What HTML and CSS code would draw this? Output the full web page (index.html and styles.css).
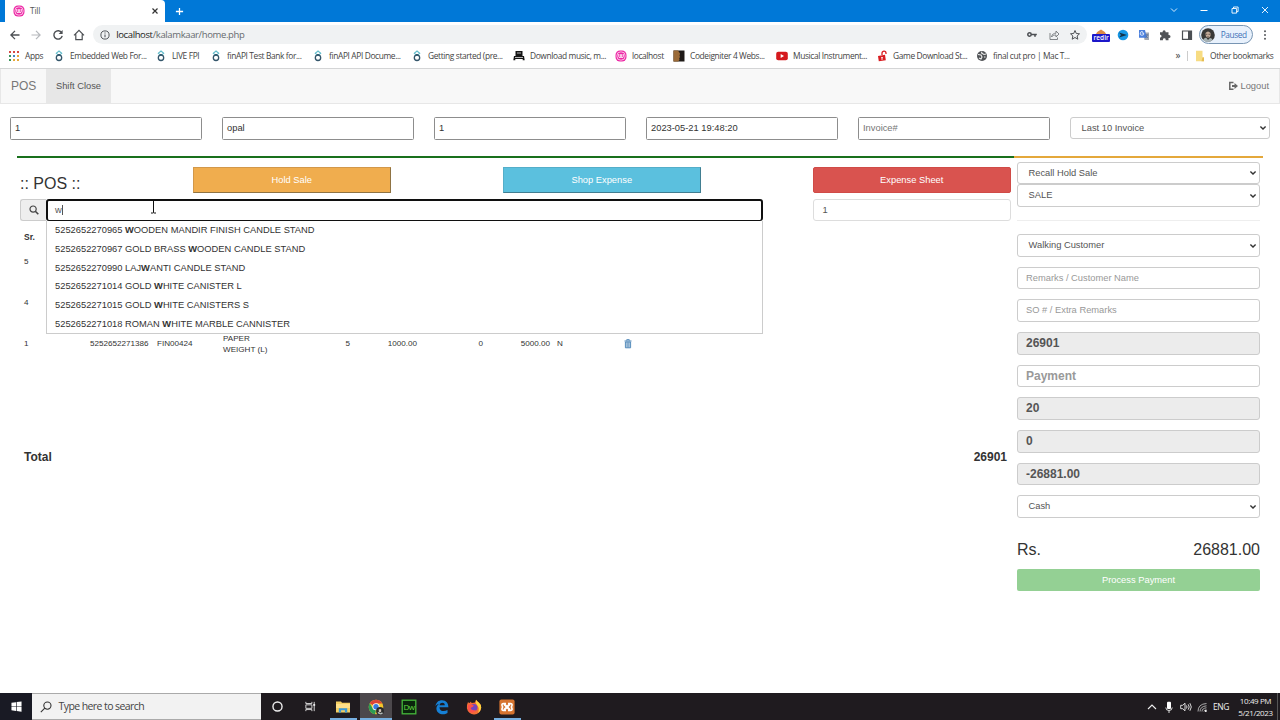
FILE: index.html
```html
<!DOCTYPE html>
<html lang="en">
<head>
<meta charset="utf-8">
<title>Till</title>
<link rel="stylesheet" href="styles.css">
</head>
<body>
<svg class="defs" width="0" height="0">
  <symbol id="chev" viewBox="0 0 8 6"><path d="M1.4 1.5 4 4.1 6.6 1.5" fill="none" stroke="#333" stroke-width="1.4"/></symbol>
  <symbol id="fin" viewBox="0 0 12 12"><path d="M6 1 8.7 3.3 6 5.6 3.3 3.3z" fill="none" stroke="#62bccb" stroke-width="1.1"/><circle cx="6" cy="7.8" r="2.7" fill="none" stroke="#34566b" stroke-width="1.3"/><path d="M3.7 5.8 6 4.2 8.3 5.8" fill="none" stroke="#34566b"/></symbol>
  <symbol id="wamp" viewBox="0 0 12 12"><rect x=".5" y=".5" width="11" height="11" rx="4.5" fill="#ed28a5"/><rect x="2" y="2" width="8" height="8" rx="3.3" fill="none" stroke="#fff" stroke-width=".7"/><path d="M3.8 4v2.6q0 1 1.1 1T6 6.6V4.2 6.6q0 1 1.1 1t1.1-1V4" fill="none" stroke="#fff" stroke-width="1"/></symbol>
</svg>
<div class="tabstrip">
  <div class="tab">
    <svg class="favicon" viewBox="0 0 12 12"><use href="#wamp"/></svg>
    <span>Till</span>
    <svg class="tab-x" viewBox="0 0 8 8"><path d="M1.5 1.5l5 5m0-5l-5 5" stroke="#333" stroke-width="1.2"/></svg>
  </div>
  <svg class="newtab" viewBox="0 0 10 10"><path d="M5 1v8M1 5h8" stroke="#fff" stroke-width="1.4"/></svg>
  <div class="winctl">
    <svg viewBox="0 0 12 12"><path d="M3 4.5 6 7.5 9 4.5" fill="none" stroke="#d5eafc" stroke-width="1"/></svg>
    <svg viewBox="0 0 12 12"><path d="M2.5 6.5h7" stroke="#fff"/></svg>
    <svg viewBox="0 0 12 12"><path d="M3 4.5h4.6v4.6H3zM4.5 4.300V3h4.600v4.600H7.700" fill="none" stroke="#fff" stroke-width=".9"/></svg>
    <svg viewBox="0 0 12 12"><path d="M3 3l6 6m0-6l-6 6" stroke="#fff" stroke-width=".9"/></svg>
  </div>
</div>
<div class="toolbar">
  <div class="navicons">
    <svg viewBox="0 0 12 12"><path d="M10.500 6H2M6 1.900 1.900 6 6 10.100" fill="none" stroke="#4c4f53" stroke-width="1.300"/></svg>
    <svg viewBox="0 0 12 12"><path d="M1.500 6H10M6 1.900 10.100 6 6 10.100" fill="none" stroke="#b5b8bc" stroke-width="1.200"/></svg>
    <svg viewBox="0 0 12 12"><path d="M9.700 3.700A4.200 4.200 0 1 0 10.200 6.900" fill="none" stroke="#4c4f53" stroke-width="1.400"/><path d="M10.600 1v4H6.600z" fill="#4c4f53"/></svg>
    <svg viewBox="0 0 12 12"><path d="M1 6.400 6 1.300l5 5.100M2.800 5.200v5.500h6.400V5.200" fill="none" stroke="#4c4f53" stroke-width="1.200"/></svg>
  </div>
  <div class="url">
    <svg class="info" viewBox="0 0 10 10"><circle cx="5" cy="5" r="4.100" fill="none" stroke="#55585c"/><path d="M5 4.500v2.800M5 2.600v1" stroke="#55585c" stroke-width="1.100"/></svg>
    <span class="addr"><b>localhost</b>/kalamkaar/home.php</span>
    <div class="urlicons">
      <svg viewBox="0 0 12 12"><circle cx="3.500" cy="5.500" r="1.700" fill="none" stroke="#4c4f53" stroke-width="1.500"/><path d="M5 5.500h5.800M9 5.500v2.300" stroke="#4c4f53" stroke-width="1.600"/></svg>
      <svg viewBox="0 0 12 12"><path d="M2 4v6.500h7.500V8.500M3.500 8C4 5 6 4.200 8 4.200V2l3 3-3 3V6C6 6 4.500 6.500 3.500 8z" fill="none" stroke="#74787c" stroke-width=".9"/></svg>
      <svg viewBox="0 0 12 12"><path d="M6 1.500 7.300 4.500l3.200.3L8.100 7l.7 3.200L6 8.500l-2.800 1.700.7-3.200-2.400-2.200 3.200-.3z" fill="none" stroke="#4c4f53" stroke-width="1"/></svg>
    </div>
  </div>
  <div class="exts">
    <div class="redir"><svg viewBox="0 0 18 6"><path d="M4 6Q5 3.500 9 1.500 13 3.500 14 6z" fill="#dc8a45"/></svg><span>redir</span></div>
    <svg viewBox="0 0 12 12"><circle cx="6" cy="6" r="5.300" fill="#1697e5"/><path d="M2 3.500 10 6 2 8.500 4 6z" fill="#10334a"/></svg>
    <svg viewBox="0 0 12 12"><path d="M5 3.500h6V11H6.500z" fill="#a2a8b2"/><path d="M1 1h6l1.800 7.700H1z" fill="#4a7fdc"/><path d="M5.800 4H3.700M5.700 4A1.800 1.800 0 1 1 5 3" fill="none" stroke="#fff" stroke-width=".8"/><path d="M7.500 6h3M9 5v1.500Q8.500 8 7.500 9M8 7l2 2" stroke="#506e9e" stroke-width=".7" fill="none"/></svg>
    <svg viewBox="0 0 12 12"><path d="M1 3.300h2.600V2.800a1.500 1.500 0 0 1 3 0v.5h2.900V6H10a1.500 1.500 0 0 1 0 3h-.5v2.200H6.700v-.5a1.400 1.400 0 0 0-2.800 0v.5H1V8.500h.5a1.400 1.400 0 0 0 0-2.700H1z" fill="#515458"/></svg>
    <svg viewBox="0 0 12 12"><path d="M1.500 2h9v8.300h-9z" fill="none" stroke="#4c4f53" stroke-width="1.200"/><path d="M7 2h4v8.300H7z" fill="#4c4f53"/></svg>
  </div>
  <div class="profile">
    <svg viewBox="0 0 14 14"><circle cx="7" cy="7" r="6.800" fill="#383837"/><path d="M4.500 5Q7 2 9.500 5v3Q7 12 4.800 8z" fill="#c2aa99"/><path d="M2 12q2-3 3.500-2L7 12l2-2q2 0 2.600 2A7 7 0 0 1 2 12z" fill="#a7b3b5"/><path d="M5 6.300h1.300M7.500 6.300H9M6 9h2" stroke="#40342f" stroke-width=".7"/></svg>
    <span>Paused</span>
  </div>
  <svg class="dots" viewBox="0 0 4 12"><circle cx="2" cy="2.200" r="1" fill="#55585c"/><circle cx="2" cy="6" r="1" fill="#55585c"/><circle cx="2" cy="9.800" r="1" fill="#55585c"/></svg>
</div>
<div class="bookmarks">
  <div><svg viewBox="0 0 12 12"><path d="M1 1h2v2H1zm4 0h2v2H5zm4 0h2v2H9z" fill="#d64a43"/><path d="M1 5h2v2H1zm0 4h2v2H1z" fill="#37945a"/><path d="M5 5h2v2H5z" fill="#4285c4"/><path d="M5 9h2v2H5zm4-4h2v2H9zm0 4h2v2H9z" fill="#e7a838"/></svg><span>Apps</span></div>
  <div><svg><use href="#fin"/></svg><span>Embedded Web For...</span></div>
  <div><svg><use href="#fin"/></svg><span>LIVE FPI</span></div>
  <div><svg><use href="#fin"/></svg><span>finAPI Test Bank for...</span></div>
  <div><svg><use href="#fin"/></svg><span>finAPI API Docume...</span></div>
  <div><svg><use href="#fin"/></svg><span>Getting started (pre...</span></div>
  <div><svg viewBox="0 0 12 12"><path d="M2.500 1h7v5H11l.7 4.300h-2V9H2.300v1.300h-2L1 6h1.500z" fill="#151515"/><path d="M4 3h4M2 7.500h8" stroke="#ddd" stroke-width=".8"/></svg><span>Download music, m...</span></div>
  <div><svg><use href="#wamp"/></svg><span>localhost</span></div>
  <div><svg viewBox="0 0 12 12"><path d="M.5.500h11v11H.5z" fill="#1e1a17"/><path d="M.5.500H5L7 3.500 6.500 6l.7 1-1 1 .3 2-1.500 1.500H.5z" fill="#9b6a37"/></svg><span>Codeigniter 4 Webs...</span></div>
  <div><svg viewBox="0 0 12 12"><rect x=".2" y="1.800" width="11.600" height="8.400" rx="2" fill="#d5191d"/><path d="M4.700 4v4L8 6z" fill="#fff"/></svg><span>Musical Instrument...</span></div>
  <div><svg viewBox="0 0 12 12"><path d="M2 6 9 4.800l.8 5.500-7 1z" fill="#d91d21"/><path d="M6 5V3.200a2 2 0 0 1 4 0V4" fill="none" stroke="#d91d21" stroke-width="1.300"/><path d="M5 7.700h2M6 7v3" stroke="#fff" stroke-width=".8"/></svg><span>Game Download St...</span></div>
  <div><svg viewBox="0 0 12 12"><circle cx="6" cy="6" r="5" fill="#505356"/><path d="M2 4.500 5 5l1 2-1 2-2-1M6 1.700 5.500 3 8 4.500 10 4M8 7l1.500 0" fill="none" stroke="#eee" stroke-width="1.100"/></svg><span>final cut pro | Mac T...</span></div>
  <div class="other"><span class="more">»</span><i></i><svg viewBox="0 0 10 12"><path d="M1 .800h6.500v6.500H9v4H1z" fill="#f7dc82"/><path d="M7.500 7.500H9v3.800H6.500z" fill="#e6bc51"/></svg><span>Other bookmarks</span></div>
</div>

<nav class="navbar">
  <span class="brand">POS</span>
  <span class="shift">Shift Close</span>
  <span class="logout"><svg viewBox="0 0 10 10"><path d="M5.500 1.500H1.800v6.800h3.700" fill="none" stroke="#666" stroke-width="1.500"/><path d="M4 4h2.500V2L10 5 6.500 8V6H4z" fill="#666"/></svg>Logout</span>
</nav>

<section class="meta">
  <div class="plain">1</div>
  <div class="plain">opal</div>
  <div class="plain">1</div>
  <div class="plain">2023-05-21 19:48:20</div>
  <div class="plain ph">Invoice#</div>
  <div class="field select">Last 10 Invoice<svg><use href="#chev"/></svg></div>
</section>
<div class="rule"><i></i><b></b></div>

<main class="content">
  <section class="sale">
    <div class="actions">
      <h3>:: POS ::</h3>
      <div class="btn warn">Hold Sale</div>
      <div class="btn shop">Shop Expense</div>
      <div class="btn danger">Expense Sheet</div>
    </div>
    <div class="searchrow">
      <div class="combo">
        <div class="addon"><svg viewBox="0 0 10 10"><circle cx="4.100" cy="4.100" r="3.100" fill="none" stroke="#444" stroke-width="1.200"/><path d="M6.300 6.300 9.300 9.300" stroke="#444" stroke-width="1.600"/></svg></div>
        <div class="query">w<i></i></div>
        <ul class="suggest">
          <li>5252652270965 <b>W</b>OODEN MANDIR FINISH CANDLE STAND</li>
          <li>5252652270967 GOLD BRASS <b>W</b>OODEN CANDLE STAND</li>
          <li>5252652270990 LAJ<b>W</b>ANTI CANDLE STAND</li>
          <li>5252652271014 GOLD <b>W</b>HITE CANISTER L</li>
          <li>5252652271015 GOLD <b>W</b>HITE CANISTERS S</li>
          <li>5252652271018 ROMAN <b>W</b>HITE MARBLE CANNISTER</li>
        </ul>
        <svg class="ibeam" viewBox="0 0 7 15"><path d="M1 1h1.800q.7 0 .7.700V13.300q0 .7-.7.700H1M6 1H4.200q-.7 0-.7.700M6 14H4.200q-.7 0-.7-.7" fill="none" stroke="#111"/></svg>
      </div>
      <div class="field qty">1</div>
    </div>
    <div class="items">
      <div class="row head"><span>Sr.</span></div>
      <div class="row"><span>5</span></div>
      <div class="row"><span>4</span></div>
      <div class="row"><span>1</span><span>5252652271386</span><span>FIN00424</span><span class="name">PAPER<br>WEIGHT (L)</span><span class="num">5</span><span class="num">1000.00</span><span class="num">0</span><span class="num">5000.00</span><span>N</span>
        <svg viewBox="0 0 8 10"><path d="M.5 2h7M2.700 1.500V.700h2.600v.8" fill="none" stroke="#4b84b7"/><path d="M1.400 3h5.200v5.800H1.400z" fill="#b5cde0" stroke="#4b84b7" stroke-width=".9"/><path d="M3.200 3.500v5M4.800 3.500v5" stroke="#4b84b7" stroke-width=".6"/></svg></div>
    </div>
    <div class="total"><span>Total</span><span>26901</span></div>
  </section>
  <aside class="pay">
    <div class="field select">Recall Hold Sale<svg><use href="#chev"/></svg></div>
    <div class="field select">SALE<svg><use href="#chev"/></svg></div>
    <hr>
    <div class="stack">
      <div class="field select">Walking Customer<svg><use href="#chev"/></svg></div>
      <div class="field hint">Remarks / Customer Name</div>
      <div class="field hint">SO # / Extra Remarks</div>
      <div class="field big locked">26901</div>
      <div class="field big hint">Payment</div>
      <div class="field big locked">20</div>
      <div class="field big locked">0</div>
      <div class="field big locked">-26881.00</div>
      <div class="field select">Cash<svg><use href="#chev"/></svg></div>
    </div>
    <div class="due"><span>Rs.</span><span>26881.00</span></div>
    <div class="process">Process Payment</div>
  </aside>
</main>

<footer class="taskbar">
  <div class="start"><svg viewBox="0 0 12 12"><path d="M.5 2 5.500 1.300v4.400h-5zM6.200 1.200 11.500.500v5.200H6.200zM.5 6.400h5v4.400L.5 10zM6.200 6.400h5.300v5.200l-5.300-.8z" fill="#fff"/></svg></div>
  <div class="tsearch"><svg viewBox="0 0 12 12"><circle cx="7.400" cy="4.600" r="3.600" fill="none" stroke="#333" stroke-width="1.100"/><path d="M4.800 7.200 .8 11.200" stroke="#333" stroke-width="1.100"/></svg><span>Type here to search</span></div>
  <div class="apps">
    <div><svg viewBox="0 0 14 14"><circle cx="7" cy="7" r="4.900" fill="none" stroke="#eee" stroke-width="1.500"/></svg></div>
    <div><svg viewBox="0 0 14 14"><path d="M2 2v1.800h6.500V2M2 5.200h6.500v3.800H2zM2 12v-1.700h6.500V12M11 2v10" fill="none" stroke="#ddd" stroke-width="1"/><path d="M10 4.300h2v2h-2z" fill="#eee"/></svg></div>
    <div class="open"><svg viewBox="0 0 16 16"><path d="M1 2.500h5l1 1.300h8v9.700H1z" fill="#f5cf62"/><path d="M1 5h14v4H1z" fill="#ffe18a"/><path d="M3.800 13.500v-4.200h8.400v4.200h-2.300v-2.300H6.100v2.300z" fill="#3d9bd6"/></svg></div>
    <div class="open active"><svg viewBox="0 0 16 16"><circle cx="8" cy="8" r="7.300" fill="#f3c62b"/><path d="M8 8 1.700 4.300A7.300 7.300 0 0 1 14.400 4.500H8z" fill="#dc4437"/><path d="M1.700 4.300 5 10l3 1.500-1 3.700A7.300 7.300 0 0 1 1.700 4.300z" fill="#2b9c55"/><circle cx="8" cy="7.700" r="3.500" fill="#fff"/><circle cx="8" cy="7.700" r="2.700" fill="#397bdd"/><circle cx="12" cy="12" r="3.900" fill="#292a29"/><path d="M10.700 10.500q1.500-1 2.500 0v2l-1.200 1-1.200-1z" fill="#d0c2b8"/><path d="M9.500 14q1-1.500 2-.500l1 .7 1.500-1 1 1q-2.500 2.500-5.500-.2z" fill="#b7bebd"/></svg></div>
    <div><svg viewBox="0 0 16 16"><rect x="1.200" y="1.200" width="13.600" height="13.600" fill="#0a250c" stroke="#45b83a" stroke-width="1.300"/><text x="8" y="11" text-anchor="middle" class="dw">Dw</text></svg></div>
    <div><svg viewBox="0 0 16 16"><path d="M1.500 7.200C2 3.300 4.600 1.200 8 1.200c4.200 0 6.400 2.900 6.400 7H5.500c0 4.600 5 4.600 8 2.800v2.900C9.500 16.500 2.300 15.200 2.400 9.300 2.500 7 3.900 5.200 5.700 4.700 3.800 4.900 2.300 5.900 1.500 7.200zM5.600 6.200h5.200c0-3.200-4.800-3-5.200 0z" fill="#1680d5" fill-rule="evenodd"/></svg></div>
    <div><svg viewBox="0 0 16 16"><path d="M2 3q.5 1 1.500 1L5 2.500 5.500 4 9 3.500 10 .8q1 1.700 3 3 2.500 2 2.200 5a7.200 7.200 0 0 1-14.300.5Q.5 6 2 3z" fill="#f36c35"/><path d="M10 .8q1 1.700 3 3 2.500 2 2.200 5-.5 3.700-3.200 5.300 2-5-1-8.100Q9 4 10 .8z" fill="#ffd53d"/><circle cx="7.800" cy="8.500" r="3.600" fill="#7446bd"/><path d="M2 6q3-1 6 .5L6.500 8q-1.500 0-2 1.500Q6 12 10 11q-2.500 4-6 2-3-2-2-7z" fill="#fd504b"/></svg></div>
    <div class="open"><svg viewBox="0 0 16 16"><rect x=".4" y=".4" width="15.200" height="15.200" rx="2" fill="#d6742f"/><path d="M5 5 11 11M11 5 5 11" stroke="#fff" stroke-width="2.200"/><path d="M7 4.500H4.500Q2.700 4.500 3 6.200L3.600 8 3 9.800Q2.700 11.500 4.500 11.500H7M9 4.500h2.500q1.800 0 1.500 1.700L12.400 8l.6 1.800q.3 1.700-1.500 1.700H9" fill="none" stroke="#fff" stroke-width="1.600"/></svg></div>
  </div>
  <div class="tray">
    <svg viewBox="0 0 12 12"><path d="M2 8 6 4l4 4" fill="none" stroke="#eee" stroke-width="1.100"/></svg>
    <svg viewBox="0 0 12 12"><rect x="4" y=".8" width="4" height="7.300" rx="1" fill="#fff"/><path d="M2.800 6.500q0 3 3.200 3t3.200-3M6 9.500V12" fill="none" stroke="#ddd" stroke-width="1"/></svg>
    <svg viewBox="0 0 12 12"><path d="M.7 4.300h2L5 2.200v7.600L2.700 7.700h-2zM6.500 4.500q1 1.500 0 3M8.200 3.300q2 2.700 0 5.400M9.900 2.200q2.800 3.800 0 7.600" fill="none" stroke="#eee" stroke-width=".9"/></svg>
    <svg viewBox="0 0 12 12"><path d="M2 10.500Q2 3 10.500 2.500M4 10.500Q4 5.500 10.500 4.800M6 10.500q0-3.200 4.500-3.700M8 10.500q0-1.500 2.500-1.700" fill="none" stroke="#bbb" stroke-width=".9"/><circle cx="9.800" cy="10" r="1" fill="#fff"/></svg>
    <span class="lang">ENG</span>
    <div class="clock"><span>10:49 PM</span><span>5/21/2023</span></div>
    <i></i>
  </div>
</footer>
</body>
</html>
```
FILE: styles.css
```css
* { box-sizing: border-box; }
body {
  margin: 0; width: 1280px; height: 720px; overflow: hidden; background: #fff; color: #333;
  font: 9.33px/13.3px "Liberation Sans", Arial, sans-serif;
  display: flex; flex-direction: column;
}
svg { display: block; flex: none; }
.defs { position: absolute; }
.tabstrip, .toolbar, .bookmarks, .taskbar { font-family: "Open Sans", "Noto Sans", sans-serif; flex: none; }

.tabstrip { height: 22px; background: #0078d7; display: flex; align-items: center; padding-left: 5px; }
.tab { width: 160px; height: 22px; background: #fff; border-radius: 0 4px 0 0; display: flex; align-items: center; padding: 0 6px 0 8px; color: #555; font-size: 8.400px; letter-spacing: -.2px; }
.favicon { width: 12px; height: 12px; margin-right: 5px; }
.tab-x { width: 8px; height: 8px; margin-left: auto; }
.newtab { width: 9px; height: 9px; margin-left: 10px; }
.winctl { margin-left: auto; display: flex; gap: 18.5px; padding: 0 9px 3px 0; }
.winctl svg { width: 12px; height: 12px; }

.toolbar { height: 23px; display: flex; align-items: center; padding: 2px 10px 0 9px; }
.navicons { display: flex; gap: 9.400px; }
.navicons svg, .urlicons svg { width: 12px; height: 12px; }
.url { width: 994px; height: 19px; margin-left: 8px; background: #f0f2f3; border-radius: 10px; display: flex; align-items: center; padding: 0 6px 0 7px; }
.info { width: 10px; height: 10px; margin-right: 6px; }
.addr { font-size: 9.500px; letter-spacing: -.37px; color: #666a6e; }
.addr b { font-weight: 400; color: #222; }
.urlicons { margin-left: auto; display: flex; gap: 9.500px; }
.exts { display: flex; align-items: center; gap: 9.400px; margin-left: 5px; }
.exts svg { width: 12px; height: 12px; }
.redir { width: 18px; margin-right: -3px; }
.redir svg { width: 18px; height: 6px; }
.redir span { display: block; height: 8px; background: #1c17c9; border-radius: 1px; color: #fff; font-weight: 600; font-size: 6.500px; line-height: 8px; text-align: center; }
.profile { width: 54px; height: 19px; border: 1px solid #7895b3; border-radius: 10px; background: #e8f1fc; margin-left: 6px; display: flex; align-items: center; gap: 6px; padding-left: 1px; color: #3f72b8; font-size: 8.300px; letter-spacing: -.4px; }
.profile svg { width: 14px; height: 14px; }
.dots { width: 4px; height: 12px; margin-left: 10px; }

.bookmarks {
  height: 24px; border-bottom: 1px solid #d4d5d6; padding: 0 7px 1px 8px; color: #444; font-size: 8.400px; letter-spacing: -.37px; white-space: nowrap;
  display: grid; align-items: center;
  grid-template-columns: 45px 102px 55px 102px 99px 102px 102px 58px 103px 100px 100px 197.500px 1fr;
}
.bookmarks > div { display: flex; align-items: center; gap: 5px; }
.bookmarks svg { width: 12px; height: 12px; }
.bookmarks .other { gap: 0; }
.bookmarks .other svg { width: 10px; margin: 0 5px 0 7px; }
.other i { width: 1px; height: 10px; background: #ccc; margin-left: 7px; }
.more { font-size: 10px; margin-left: 2px; }

.navbar { height: 34.500px; flex: none; background: #f8f8f8; border: 1px solid #e7e7e7; border-top: 0; display: flex; align-items: stretch; line-height: 34px; color: #777; }
.brand { width: 45px; padding-left: 10px; font-size: 12px; }
.shift { width: 65px; background: #e7e7e7; color: #555; text-align: center; }
.logout { margin-left: auto; margin-right: 10px; display: flex; align-items: center; gap: 2px; }
.logout svg { width: 10px; height: 10px; }

.meta { display: grid; grid-template-columns: repeat(5, 192px) 200px; gap: 20px; padding: 13px 10px 0; }
.plain { height: 23px; border: 1px solid #8d8d8d; border-radius: 1.500px; padding: 0 4px; line-height: 21.500px; }
.plain.ph { color: #757575; }
.field { height: 22.600px; border: 1px solid #ccc; border-radius: 3px; padding: 0 8px; line-height: 21px; color: #555; background: #fff; }
.select { display: flex; justify-content: space-between; padding: 0 2px 0 10.500px; }
.select svg { width: 8px; height: 6px; margin-top: 7.500px; }
.rule { display: flex; height: 2px; margin: 16px 17px 0; }
.rule i { width: 997px; background: #19701c; }
.rule b { flex: 1; background: #e4a83b; }

.content { flex: 1; display: flex; justify-content: space-between; padding: 3.500px 20px 0; }
.sale { width: 990.500px; padding-top: 5.500px; }
.actions { display: grid; grid-template-columns: 172.500px 310px 310px 198.500px; height: 26.500px; }
.actions h3 { margin: 8px 0 0; font-size: 16px; font-weight: 400; line-height: 18px; }
.btn { width: 198.500px; height: 26.500px; color: #fff; text-align: center; border: 1px solid; border-radius: 2px; line-height: 25.500px; }
.warn { background: #f0ad4e; border-color: #d2984a #8f7343 #8f7343 #d2984a; border-width: 1px 1.500px 1.500px 1px; border-radius: 0; }
.shop { background: #5bc0de; border-color: #54aec9 #417e91 #417e91 #54aec9; border-width: 1px 1.500px 1.500px 1px; border-radius: 0; }
.danger { background: #d9534f; border-color: #d04b47; }

.searchrow { display: flex; justify-content: space-between; margin-top: 5.500px; }
.combo { position: relative; display: flex; width: 743px; }
.addon { width: 26px; height: 22.500px; background: #eee; border: 1px solid #ccc; border-right: 0; border-radius: 3px 0 0 3px; display: flex; align-items: center; justify-content: center; }
.addon svg { width: 10px; height: 10px; }
.query { flex: 1; height: 22.500px; border: 2px solid #101010; border-bottom-width: 1.500px; border-radius: 3px; padding-left: 7px; line-height: 19px; color: #555; display: flex; align-items: center; }
.query i { width: 1px; height: 10px; background: #555; }
.qty { width: 198px; height: 22.500px; padding-left: 9px; border-color: #ddd; }
.suggest { position: absolute; z-index: 2; top: 22px; left: 26px; width: 717px; height: 113px; margin: 0; padding: .800px 0 0 8px; list-style: none; background: #fff; border: 1px solid #ccc; border-top: 0; color: #333; }
.suggest li { line-height: 18.700px; }
.ibeam { position: absolute; z-index: 3; left: 130px; top: 0; width: 7px; height: 15px; }

.items { font-size: 8.100px; line-height: 11.500px; padding: 5.500px 4px 0; }
.row { display: grid; align-items: center; height: 41px; grid-template-columns: 66px 67px 66px 96px 31px 67px 66px 67px 74px 8px; }
.row:nth-child(2) { margin-top: -8px; }
.head { height: 23px; font-weight: 700; font-size: 8.500px; }
.row svg { width: 8px; height: 10px; }
.num { text-align: right; }
.row .num + span:not(.num) { padding-left: 7px; }
.total { display: flex; justify-content: space-between; font-size: 12px; font-weight: 700; padding: 84px 3.500px 0 4px; line-height: 16px; }

.pay { width: 243px; padding-top: .5px; }
.pay hr { border: 0; border-top: 1px solid #eee; margin: 13px 0 13.400px; }
.stack { display: flex; flex-direction: column; gap: 10.070px; }
.big { font-size: 12px; font-weight: 700; }
.locked { background: #ececec; }
.hint { color: #999; }
.due { display: flex; justify-content: space-between; font-size: 16px; line-height: 20px; padding: 22px 0 9px; }
.process { height: 22.500px; border-radius: 2px; background: #94d094; color: #fff; text-align: center; line-height: 22px; }

.taskbar { height: 27px; background: #1f1b1f; display: flex; color: #eee; }
.start { width: 32px; display: flex; align-items: center; justify-content: center; background: #191a24; }
.start svg { width: 11px; height: 11px; }
.tsearch { width: 229px; background: #f2f2f2; border: 1px solid #aaa; border-width: 1px 0; display: flex; align-items: center; padding-left: 8px; gap: 6.500px; color: #444; font-size: 10.500px; letter-spacing: -.58px; }
.tsearch svg { width: 12px; height: 12px; }
.apps { display: flex; }
.apps > div { width: 32.800px; display: flex; align-items: center; justify-content: center; }
.apps svg { width: 16px; height: 16px; }
.apps > div:nth-child(-n+2) svg { width: 13px; height: 13px; }
.apps .open { border-bottom: 2px solid #76afe0; padding-top: 2px; width: 27px; margin: 0 3px; }
.apps .active { background: #4c484c; width: 32px; margin: 0 .4px; }
.dw { font: 400 8px "Open Sans", sans-serif; letter-spacing: -.4px; fill: #64db44; }
.tray { margin-left: auto; display: flex; align-items: center; letter-spacing: -.4px; }
.tray svg { width: 12px; height: 12px; margin-right: 4.700px; }
.lang { font-size: 8.500px; width: 22px; }
.clock { width: 41px; font-size: 8px; line-height: 12px; display: flex; flex-direction: column; align-items: center; }
.tray i { width: 1px; height: 27px; background: #555; margin: 0 2px 0 1px; }
```
